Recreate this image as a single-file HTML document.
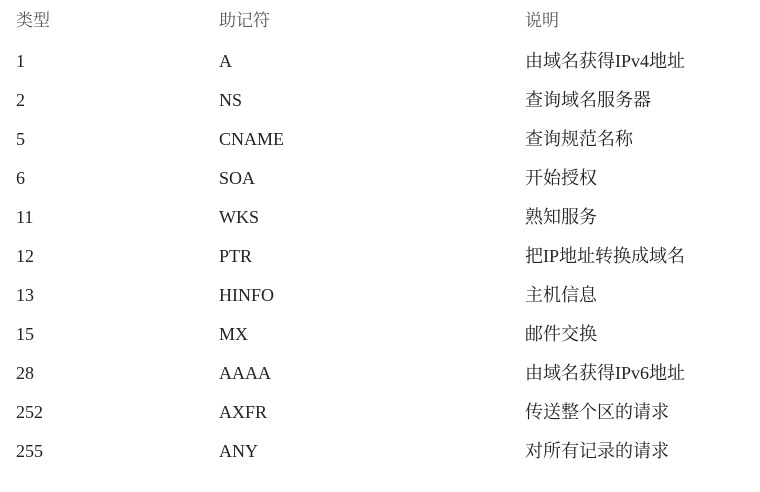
<!DOCTYPE html>
<html><head><meta charset="utf-8"><style>
html,body{margin:0;padding:0;background:#fff;width:760px;height:492px;overflow:hidden}
.r{position:absolute;left:0;height:39px;width:760px;font-family:"Liberation Serif","Noto Serif CJK SC",serif;font-size:18px;color:#222;line-height:20px}
.r span{position:absolute;top:0}
.a{left:16px}.b{left:219px}.c{left:525px}
.h{color:#555;font-size:17px}
</style></head><body>
<div class="r h" style="top:11px"><span class="a">类型</span><span class="b">助记符</span><span class="c">说明</span></div>
<div class="r" style="top:51px"><span class="a">1</span><span class="b">A</span><span class="c">由域名获得IPv4地址</span></div>
<div class="r" style="top:90px"><span class="a">2</span><span class="b">NS</span><span class="c">查询域名服务器</span></div>
<div class="r" style="top:129px"><span class="a">5</span><span class="b">CNAME</span><span class="c">查询规范名称</span></div>
<div class="r" style="top:168px"><span class="a">6</span><span class="b">SOA</span><span class="c">开始授权</span></div>
<div class="r" style="top:207px"><span class="a">11</span><span class="b">WKS</span><span class="c">熟知服务</span></div>
<div class="r" style="top:246px"><span class="a">12</span><span class="b">PTR</span><span class="c">把IP地址转换成域名</span></div>
<div class="r" style="top:285px"><span class="a">13</span><span class="b">HINFO</span><span class="c">主机信息</span></div>
<div class="r" style="top:324px"><span class="a">15</span><span class="b">MX</span><span class="c">邮件交换</span></div>
<div class="r" style="top:363px"><span class="a">28</span><span class="b">AAAA</span><span class="c">由域名获得IPv6地址</span></div>
<div class="r" style="top:402px"><span class="a">252</span><span class="b">AXFR</span><span class="c">传送整个区的请求</span></div>
<div class="r" style="top:441px"><span class="a">255</span><span class="b">ANY</span><span class="c">对所有记录的请求</span></div>
</body></html>
